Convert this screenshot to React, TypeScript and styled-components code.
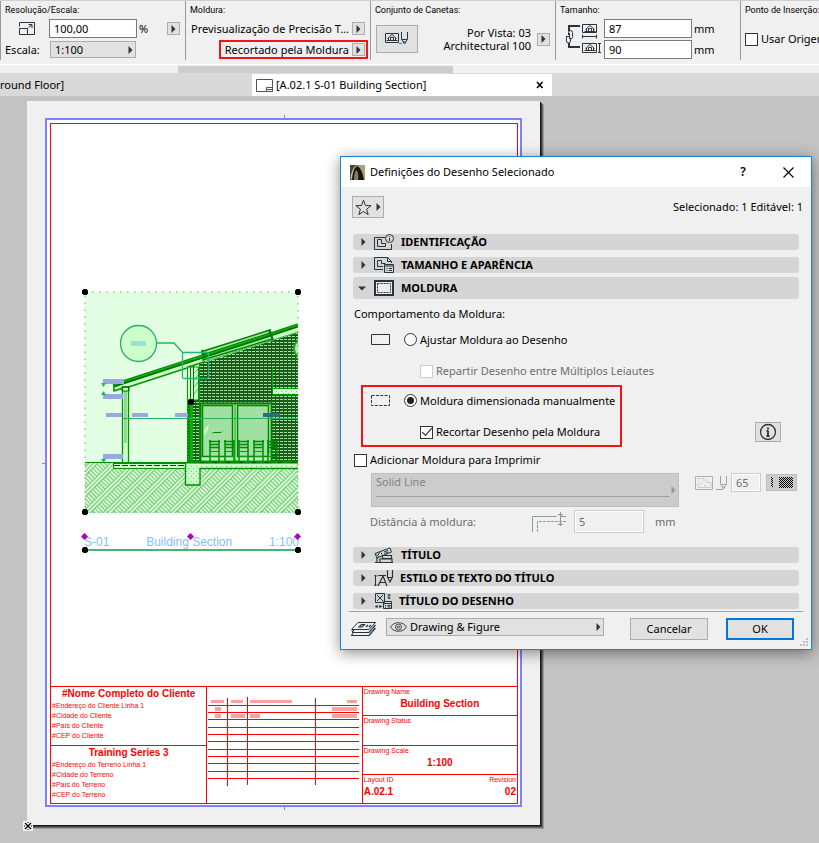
import React from 'react';
import styled, { createGlobalStyle, css } from 'styled-components';

const INK = '#27343d';

const GlobalStyle = createGlobalStyle`
  *, *::before, *::after { box-sizing: border-box; }
  html, body, #root { height: 100%; }
  body { margin: 0; overflow: hidden; }
  body, button, input, select {
    font-family: "Noto Sans", "Open Sans", sans-serif;
    font-size: 11px;
    line-height: 14px;
    color: #000;
  }
  svg { display: block; flex: none; }
`;

const Page = styled.div`
  display: flex;
  flex-direction: column;
  height: 100vh;
  min-height: 760px;
  overflow: hidden;
  background: #c3c3c3;
`;

/* ---------- info bar ---------- */

const InfoBar = styled.header`
  display: flex;
  flex: none;
  height: 64px;
  padding-bottom: 4px;
  border-top: 1px solid #d0d0d0;
  background: #f0f0f0;
  overflow: hidden;
`;

const InfoPanel = styled.section`
  flex: 0 0 185px;
  height: 59px;
  padding: 2px 5px 0 4px;
  border-left: 1px solid #999;
  white-space: nowrap;
`;

const PanelTitle = styled.h2`
  margin: 0 0 1px;
  font-family: Roboto, "Noto Sans", sans-serif;
  font-size: 9px;
  font-weight: 400;
  line-height: 14px;
`;

const PanelRow = styled.div<{ $end?: boolean }>`
  display: flex;
  align-items: center;
  justify-content: ${p => (p.$end ? 'flex-end' : 'flex-start')};
  height: 21px;
`;

const PanelBody = styled.div`
  display: flex;
  align-items: center;
  gap: 3px;
  height: 42px;
`;

const IconSlot = styled.span`
  display: flex;
  justify-content: center;
  width: 44px;
`;

const ScaleLabel = styled.label`
  width: 45px;
`;

const Field = styled.input<{ $w: number; $h?: number }>`
  width: ${p => p.$w}px;
  height: ${p => p.$h ?? 19}px;
  padding: 0 4px;
  border: 1px solid #7a7a7a;
  background: #fff;
  &:disabled {
    border: 1px solid #ccc;
    background: #f0f0f0;
    box-shadow: inset 0 0 0 1px #fff;
    color: #6d6d6d;
  }
`;

const Unit = styled.span`
  margin-left: 2px;
`;

const buttonFace = css`
  display: flex;
  align-items: center;
  justify-content: center;
  padding: 0;
  border: 1px solid #adadad;
  background: #e1e1e1;
`;

const Arrow = styled.button<{ $push?: boolean }>`
  ${buttonFace}
  flex: none;
  width: 13px;
  height: 13px;
  margin-left: ${p => (p.$push ? 'auto' : '3px')};
`;

const SelectShell = styled.div<{ $h: number }>`
  position: relative;
  flex: 1;
  height: ${p => p.$h}px;
  select {
    appearance: none;
    width: 100%;
    height: 100%;
    margin: 0;
    padding: 0 0 0 4px;
    border: 1px solid #adadad;
    border-radius: 0;
    background: #e1e1e1;
  }
  > svg {
    position: absolute;
    top: 50%;
    right: 3px;
    margin-top: -4px;
    pointer-events: none;
  }
`;

const ScaleSelect = styled.div`
  display: flex;
  width: 86px;
`;

const Highlight = styled.div`
  display: flex;
  align-items: center;
  height: 19px;
  margin-right: -3px;
  padding: 0 1px 0 4px;
  border: 2px solid #f31414;
`;

const ValueText = styled.span`
  line-height: 13px;
`;

const PenSetValue = styled(ValueText)`
  flex: 1;
  text-align: right;
`;

const PenSetButton = styled.button`
  ${buttonFace}
  width: 42px;
  height: 28px;
  margin-left: 1px;
`;

const SizeIconSlot = styled.span`
  margin-left: 6px;
`;

const SizeFields = styled.div`
  display: flex;
  flex-direction: column;
  gap: 2px;
`;

const FieldLine = styled.label`
  display: flex;
  align-items: center;
`;

const Check = styled.input<{ $dim?: boolean }>`
  appearance: none;
  flex: none;
  display: grid;
  place-items: center;
  width: 13px;
  height: 13px;
  margin: 0;
  border: 1px solid ${p => (p.$dim ? '#ccc' : '#333')};
  background: #fff;
  &[type='radio'] { border-radius: 50%; }
  &[type='radio']:checked::after {
    content: '';
    width: 7px;
    height: 7px;
    border-radius: 50%;
    background: #222;
  }
  &[type='checkbox']:checked::after {
    content: '';
    width: 10px;
    height: 5px;
    margin-bottom: 3px;
    border: solid #222;
    border-width: 0 0 1px 1px;
    transform: rotate(-48deg);
  }
`;

const CheckLabel = styled.label<{ $dim?: boolean }>`
  display: flex;
  align-items: center;
  gap: 3px;
  white-space: nowrap;
  color: ${p => (p.$dim ? '#6d6d6d' : '#000')};
`;

/* ---------- scroll strip and tabs ---------- */

const ScrollStrip = styled.div`
  flex: none;
  height: 9px;
  padding: 1px 366px 1px 178px;
  border-top: 1px solid #fff;
  background: #f0f0f0;
`;

const ScrollThumb = styled.div`
  height: 7px;
  background: #cdcdcd;
`;

const TabBar = styled.nav`
  display: flex;
  flex: none;
  height: 23px;
  background: #d9d9d9;
`;

const Tab = styled.div<{ $active?: boolean }>`
  display: flex;
  align-items: center;
  flex: 0 0 ${p => (p.$active ? 300 : 252)}px;
  gap: 2px;
  padding: ${p => (p.$active ? '0 7px 0 4px' : '0')};
  margin-top: 1px;
  background: ${p => (p.$active ? '#fff' : 'transparent')};
  white-space: nowrap;
`;

const TabClose = styled.button`
  display: flex;
  margin-left: auto;
  padding: 1px;
  border: 0;
  background: none;
`;

/* ---------- layout sheet ---------- */

const Workspace = styled.main`
  position: relative;
  display: flex;
  flex: 1;
  padding: 5px 0 18px 27px;
  min-height: 0;
`;

const Paper = styled.div`
  position: relative;
  display: flex;
  width: 100%;
  max-width: 513px;
  padding: 17px 18px 18px;
  background: #f0f0f0;
  box-shadow: 1px 1px 0 #1a1a1a, 2px 2px 0 #3c3c3c, 3px 3px 0 #6a6a6a, 4px 4px 0 #9c9c9c;
`;

const OriginMark = styled.svg`
  position: absolute;
  left: -4px;
  bottom: -6px;
`;

const MarginFrame = styled.div`
  position: relative;
  display: flex;
  flex: 1;
  padding: 3px 2px 1px 3px;
  border: 2px solid #8080ff;
  background: #fff;
`;

const Tick = styled.i<{ $side: 'left' | 'top' | 'bottom' }>`
  position: absolute;
  background: #8080ff;
  ${p => p.$side === 'left' && css`left: -5px; top: 50%; width: 4px; height: 1px;`}
  ${p => p.$side === 'top' && css`left: 50%; top: -5px; width: 1px; height: 4px;`}
  ${p => p.$side === 'bottom' && css`left: 50%; bottom: -5px; width: 1px; height: 4px;`}
`;

const Sheet = styled.div`
  display: flex;
  flex: 1;
  flex-direction: column;
  border: 1px solid #f00;
`;

const DrawingArea = styled.div`
  flex: 1;
  padding: 163px 29px 0;
`;

const Figure = styled.figure`
  width: 224px;
  margin: 0;
`;

const Caption = styled.figcaption`
  position: relative;
  display: flex;
  justify-content: space-between;
  margin: 18px 5px 0 4px;
  border-bottom: 2px solid #45b56f;
  font-family: "Liberation Sans", Arial, sans-serif;
  font-size: 12px;
  line-height: 14px;
  color: #80bfff;
`;

const CaptionHandles = styled.svg`
  position: absolute;
  left: -4px;
  top: -3px;
`;

const TitleBlock = styled.div`
  display: grid;
  grid-template-columns: 1fr 1fr 1fr;
  flex: none;
  height: 117px;
  border-top: 1px solid #f00;
  font-family: "Liberation Sans", Arial, sans-serif;
  font-size: 7px;
  line-height: 10px;
  color: #f00;
`;

const BlockColumn = styled.div`
  display: flex;
  flex-direction: column;
  & + & { border-left: 1px solid #f00; }
`;

const BlockCell = styled.div`
  flex: 1;
  padding: 0 1px;
  white-space: nowrap;
  & + & { border-top: 1px solid #f00; }
`;

const BlockStrong = styled.strong`
  display: block;
  font-size: 10px;
  line-height: 14px;
  text-align: center;
`;

const BlockLine = styled.div``;

const Split = styled.div`
  display: flex;
  justify-content: space-between;
`;

/* ---------- dialog ---------- */

const Dialog = styled.div`
  position: absolute;
  top: 60px;
  left: 340px;
  right: 7px;
  border: 1px solid #1883d7;
  background: #f0f0f0;
  box-shadow: 0 3px 14px rgba(0, 0, 0, 0.45);
`;

const DialogTitle = styled.div`
  display: flex;
  align-items: center;
  height: 30px;
  gap: 5px;
  padding: 0 17px 0 9px;
  background: #fff;
  h1 {
    flex: 1;
    margin: 0;
    font-size: 11px;
    font-weight: 400;
  }
`;

const TitleButton = styled.button`
  display: flex;
  justify-content: center;
  width: 12px;
  margin-left: 28px;
  padding: 0;
  border: 0;
  background: none;
  font-size: 12px;
  font-weight: 600;
`;

const DialogBody = styled.div`
  padding: 9px 12px 0;
`;

const TopRow = styled.div`
  display: flex;
  align-items: center;
  justify-content: space-between;
  margin: 0 -4px 16px -1px;
`;

const FavoriteButton = styled.button`
  ${buttonFace}
  width: 32px;
  height: 22px;
  gap: 4px;
`;

const Header = styled.button<{ $open?: boolean }>`
  display: flex;
  align-items: center;
  width: 100%;
  height: ${p => (p.$open ? 22 : 16)}px;
  margin: ${p => (p.$open ? '-3px 0 0' : '0 0 7px')};
  padding: 0 0 0 ${p => (p.$open ? 5 : 8)}px;
  border: 0;
  border-radius: 3px;
  background: #d5d5d5;
  font-weight: 700;
  > svg:first-child { margin-right: 8px; }
  > svg + svg { margin-right: 6px; }
`;

const FramePanel = styled.div`
  display: flex;
  flex-direction: column;
  padding: 8px 0 14px 1px;
`;

const OptionRow = styled.div<{ $h: number; $indent: number }>`
  display: flex;
  align-items: center;
  gap: 14px;
  height: ${p => p.$h}px;
  padding-left: ${p => p.$indent}px;
`;

const ManualRow = styled.div`
  display: flex;
  align-items: flex-end;
  justify-content: space-between;
  margin: 1px 0 6px;
  padding-right: 18px;
`;

const ManualBox = styled.div`
  width: 261px;
  height: 62px;
  margin-left: 7px;
  border: 2px solid #f31414;
`;

const InfoButton = styled.button`
  ${buttonFace}
  width: 26px;
  height: 20px;
  margin-bottom: 5px;
`;

const LineRow = styled.div`
  display: flex;
  align-items: flex-start;
  padding: 6px 2px 0 17px;
`;

const LineSelect = styled.div`
  position: relative;
  flex: 1;
  height: 34px;
  margin-right: 16px;
  select {
    appearance: none;
    width: 100%;
    height: 100%;
    padding: 0 4px 16px;
    border: 1px solid #bfbfbf;
    border-radius: 0;
    background: #ccc;
    color: #838383;
    opacity: 1;
  }
  &::after {
    content: '';
    position: absolute;
    left: 5px;
    right: 9px;
    bottom: 10px;
    height: 1px;
    background: #a0a0a0;
  }
  > svg {
    position: absolute;
    right: 3px;
    top: 13px;
  }
`;

const PenGroup = styled.div`
  display: flex;
  align-items: center;
  gap: 3px;
`;

const SwatchButton = styled.button`
  ${buttonFace}
  width: 31px;
  height: 17px;
  margin-left: 2px;
  border-color: #bfbfbf;
  background: #ccc;
`;

const DistanceRow = styled.div`
  display: flex;
  align-items: center;
  gap: 7px;
  padding: 3px 0 0 16px;
  color: #6d6d6d;
  label { width: 155px; }
`;

const DistanceUnit = styled.span`
  margin-left: 4px;
`;

const Footer = styled.footer`
  display: flex;
  align-items: center;
  margin: -5px 8px 0;
  padding: 6px 9px 9px 2px;
  border-top: 1px solid #a0a0a0;
  > svg { margin-right: 10px; }
`;

const LayerSelect = styled(SelectShell)`
  margin-bottom: 4px;
  margin-right: 26px;
  select { padding-left: 23px; }
  > svg:last-child { left: 4px; right: auto; margin-top: -5px; }
`;

const DialogButton = styled.button<{ $primary?: boolean }>`
  ${buttonFace}
  width: ${p => (p.$primary ? 68 : 78)}px;
  height: 22px;
  border: ${p => (p.$primary ? '2px solid #0078d7' : '1px solid #adadad')};
  & + & { margin-left: 18px; }
`;

const Grip = styled.svg`
  position: absolute;
  right: 2px;
  bottom: 2px;
`;

/* ---------- icons ---------- */

const Triangle = ({ color = '#333' }: { color?: string }) => (
  <svg width="5" height="8" viewBox="0 0 5 8"><path d="M.5 0v8L4.500 4z" fill={color} /></svg>
);

const Icon = ({ w, h, children, color = INK }: { w: number; h: number; children: React.ReactNode; color?: string }) => (
  <svg width={w} height={h} viewBox={`0 0 ${w} ${h}`} fill="none" stroke={color}>{children}</svg>
);

const ResizeIcon = () => (
  <Icon w={17} h={14}>
    <path d="M.5 4.500V.5h15v12h-7M.5 6.500h8v6h-8zM7.500 6.500h1M9.500 5.500l3.500-3M9.500 2.500h3.500v3.500" />
  </Icon>
);

const HouseGlyph = () => (
  <path d="M1.500 8.500h11M3.500 8V6M10.500 8V6M2.500 6.500l4.500-4 4.500 4M5.500 8V5.500h3V8" />
);

const PenSetIcon = () => (
  <Icon w={24} h={15}>
    <path d="M.5 1.500h13v9h-13z" />
    <HouseGlyph />
    <path d="M16.500 0v7l3 5 3-5V0M17 7.500h5M18 10h3" />
    <path d="M14 11.500h3" stroke="#2a7fd4" />
  </Icon>
);

const SizeLinkIcon = () => (
  <Icon w={35} h={30}>
    <path d="M3 7V2h11M3 19v4h11" strokeWidth="2" />
    <path d="M2.500 11V8.500a2 2 0 0 1 4 0v4M3.500 9v6M.5 12v5a2 2 0 0 0 4 0v-3M1 12.500h3M6.500 12.500c0 2-1 2.500-2 2.500" />
    <path d="M16.500.5h14v8h-14zM16.500 19.500h14v9h-14z" />
    <g transform="translate(17 -1)"><HouseGlyph /></g>
    <g transform="translate(17 18)"><HouseGlyph /></g>
    <path d="M17 12.500h13M16.500 10.500v4M30.500 10.500v4M33.500 19.500v9M32 19.500h3M32 28.500h3" />
  </Icon>
);

const LayoutIcon = () => (
  <Icon w={18} h={13} color="#555">
    <path d="M.5.5h16v12H.5zM10.500 8.500h6v4h-6zM10.500 10.500h6" />
  </Icon>
);

const CloseIcon = () => (
  <Icon w={8} h={8} color="#000"><path d="M1 1l5.500 6M6.500 1L1 7" strokeWidth="1.600" /></Icon>
);

const AppIcon = () => (
  <svg width="15" height="15" viewBox="0 0 15 15">
    <rect width="15" height="15" fill="#857a5c" />
    <path d="M0 0h6L2 8 1 15H0z" fill="#4a4536" />
    <path d="M8 0h7v15h-2C13 8 11 3 8 1z" fill="#a89e80" />
    <path d="M2 15C3 8 4 3 7 1c4 2 6 8 7 14H8C9 10 8 6 6 5 4 8 4 12 4 15z" fill="#17140f" />
    <path d="M1 14C2 6 4 2 6.500 1" fill="none" stroke="#e0d8be" />
  </svg>
);

const StarIcon = () => (
  <Icon w={17} h={17}>
    <path d="M8.500 1.200l2 5.300 5.600.2-4.500 3.500 1.600 5.400-4.700-3.100-4.700 3.100 1.600-5.400L.9 6.700l5.600-.2z" />
  </Icon>
);

const IdentIcon = () => (
  <Icon w={21} h={16}>
    <path d="M11 3.500H.5v12h17V10M3.500 5.500h4v4h4v3h-8z" />
    <circle cx="15.500" cy="4.500" r="4" />
    <path d="M15.500 4v3M15.500 2v1" />
  </Icon>
);

const SizeIcon = () => (
  <Icon w={21} h={16}>
    <path d="M9 12.500H.5V.5h13l4 4M13.500.5v4h4V6M3.500 3.500h4v3h4M3.500 3.500v6H9" />
    <path d="M10.500 7.500h9v8h-9zM10 9h10M12.500 11.500h1M15 11.500h3M12.500 13.500h1M15 13.500h3" />
  </Icon>
);

const FrameIcon = () => (
  <Icon w={21} h={16}>
    <path d="M1 1h18v14H1z" strokeWidth="2" fill="#ececec" />
    <path d="M3.500 3.500h13v9h-13z" strokeDasharray="2 1" />
  </Icon>
);

const LabelIcon = () => (
  <Icon w={21} h={17}>
    <path d="M1 6.500L16 1l1.500 4L3 11z" fill="#d5d5d5" />
    <path d="M4 8.500l1.500-3M7 5.500l1 2M10 5l4-1.500M10.500 6.500l4-1.500M2.500 7.500l2 2" />
    <path d="M8.500 8.500h9v3h-9zM3 10v5.500h15v-4M1 15.500h18M6 15v-3h12" strokeWidth="1.200" />
  </Icon>
);

const TextStyleIcon = () => (
  <Icon w={20} h={17}>
    <path d="M1.500 5v11M0 6.500L1.500 5 3 6.500M0 14.500L1.500 16 3 14.500M4 5.500h8" />
    <path d="M4 16l5-10 4 10M6 12.500h5.500M13.500 0v7l2.500 5 2.500-5V0M13.500 7.500h5" strokeWidth="1.200" />
  </Icon>
);

const DrawingTitleIcon = () => (
  <Icon w={19} h={17}>
    <path d="M1.500.5h9v9h-9zM3 2l6 6M9 2L3 8" />
    <path d="M9.500 8.500h8v7h-8zM9.500 10.500h8M11 12.500h1M13.500 12.500h3M11 14h1M13.500 14h3M15 1v5M13.500 2h3M13.500 5h3M1 13.500h3M5 13.500h3M3 12v3M6 12v3" />
  </Icon>
);

const SolidFrameIcon = () => <Icon w={19} h={12}><path d="M.5.5h18v10H.5z" /></Icon>;
const DashFrameIcon = () => <Icon w={19} h={12}><path d="M.5.5h18v10H.5z" strokeDasharray="3 1.400" /></Icon>;

const InfoIcon = () => (
  <Icon w={18} h={18}>
    <circle cx="9" cy="9" r="7.500" strokeWidth="1.300" />
    <path d="M9 7.500v5.500M9 4.500v2M7.500 13h3M7.500 7.800H9" strokeWidth="1.800" />
  </Icon>
);

const PlanIcon = () => (
  <Icon w={18} h={14} color="#a9aeb1">
    <path d="M.5.5h17v13H.5z" />
    <path d="M3 11.500h13v-5h-4v-4M3 2.500h6v3M3 2.500v2M3 7v4M10 8.500v3M5 5.500l2 2-2 2" stroke="#c8cccd" />
  </Icon>
);

const PenIcon = () => (
  <Icon w={12} h={14} color="#9fa3a6">
    <path d="M4.500 0v8l3 5 3-5V0M5 8.500h5M0 13.500h7M6 11h3" />
  </Icon>
);

const SwatchIcon = () => (
  <svg width="22" height="11" viewBox="0 0 22 11">
    <defs>
      <pattern id="checker" width="2" height="2" patternUnits="userSpaceOnUse">
        <rect width="2" height="2" fill="#ccc" />
        <path d="M0 0h1v1H0zM1 1h1v1H1z" fill="#000" />
      </pattern>
    </defs>
    <path d="M0 0h2v10H0zM8 0h14v11H8z" fill="url(#checker)" shapeRendering="crispEdges" />
  </svg>
);

const OffsetIcon = () => (
  <Icon w={35} h={20} color="#92979a">
    <path d="M.5 20V4.500h24M28 4.500h6" />
    <path d="M5.500 20V9.500H34" strokeDasharray="3 1" />
    <path d="M28.500 0v14M26 2.500h5M26 12.500h5M27 2l1.500 2L30 2M27 13l1.500-2 1.500 2" />
  </Icon>
);

const LayersIcon = () => (
  <Icon w={25} h={14}>
    <path d="M7 .5h17.500L18 7.500H.5z" />
    <path d="M24.500 3L18 10.500H1M24.500 6L18 13.500H.5L2 11.500M1 10l2-2M8 5l2.500-2.500h3L11 5zM15 5l2-2M18 5l2-2" strokeWidth="1.200" />
  </Icon>
);

const EyeIcon = () => (
  <Icon w={17} h={10} color="#444">
    <path d="M.5 5C4-.8 13-.8 16.500 5 13 10.800 4 10.800.5 5z" />
    <circle cx="8.500" cy="5" r="3" />
    <circle cx="8.500" cy="5" r="1" />
  </Icon>
);

/* ---------- building section drawing ---------- */

const HANDLE = 'M-1.500-3h3l1.500 1.500v3L1.500 3h-3L-3 1.500v-3z';

const SectionDrawing = () => (
  <svg width="224" height="230" viewBox="80 287 224 230" fill="none">
    <defs>
      <clipPath id="crop"><rect x="85" y="292" width="213" height="221" /></clipPath>
      <pattern id="brick" width="4" height="3" patternUnits="userSpaceOnUse">
        <rect width="4" height="3" fill="#1b5c1b" />
        <rect width="3" height="1" fill="#a4e0a4" />
      </pattern>
      <pattern id="soil" width="3" height="15" patternUnits="userSpaceOnUse" patternTransform="rotate(-45)">
        <path d="M0 .5h3M0 3.500h3M0 6.500h3M1.500 6.500v8.500" stroke="#6fae6f" strokeWidth=".8" />
      </pattern>
      <pattern id="concrete" width="5" height="5" patternUnits="userSpaceOnUse">
        <path d="M1 1h1v1H1zM3 3h1v1H3z" fill="#7fc27f" />
      </pattern>
    </defs>
    <g clipPath="url(#crop)">
      <rect x="85" y="292" width="213" height="221" fill="#e3ffe3" />
      <rect x="85" y="463" width="213" height="50" fill="#ccffcc" />
      <rect x="85" y="463" width="213" height="50" fill="url(#soil)" />

      <path d="M199 364L298 332V463H199z" fill="url(#brick)" shapeRendering="crispEdges" />
      <path d="M187 400h12v63h-12z" fill="url(#brick)" shapeRendering="crispEdges" />

      <path d="M113.500 385.500L298 325.500V332.500L113.500 391.500z" fill="#ccffcc" />
      <path d="M202 351.500L270 330l2.500 9-69.500 21z" fill="#a0e0a0" stroke="#008000" strokeWidth="1.500" />
      <path d="M202 355L271 333" stroke="#008000" />
      <path d="M113.500 385.500L298 325.500" stroke="#006e00" strokeWidth="4" />
      <path d="M113.500 385L298 325" stroke="#00b800" strokeWidth="1.500" />
      <path d="M114 391.500V384M114 391l12-4M127 387.500L187 368M187 367.500L205 361.500" stroke="#009600" strokeWidth="1.600" />
      <path d="M205 361.500L298 332" stroke="#2cc02c" />
      <path d="M202 350l3 8M269 330l4 10" stroke="#007800" strokeWidth="2" />

      <path d="M122.500 387h6v76h-6z" fill="#ccffcc" stroke="#009000" strokeWidth="1.300" />
      <path d="M125.500 391v52" stroke="#90d890" strokeWidth="3" />
      <path d="M122 387h7v4h-7z" stroke="#007000" />
      <path d="M187.500 367h11v33h-11z" fill="#ccffcc" stroke="#009000" />
      <path d="M190.500 366v36M193.500 366v36" stroke="#007800" />
      <path d="M194 380l4-5M194 387l4-5M194 394l4-5M194 373l4-4" stroke="#70b070" />
      <path d="M199.500 363v100M187.500 368v95" stroke="#00a000" />
      <path d="M191 402v61" stroke="#00b400" strokeWidth="4" />
      <path d="M189 402v61" stroke="#006c00" />

      <rect x="200.500" y="403.500" width="71" height="59" fill="#c0f4c0" stroke="#008400" strokeWidth="2" />
      <rect x="202.500" y="405.500" width="30" height="51" fill="#a0e0a0" stroke="#008400" strokeWidth="1.500" />
      <rect x="237.500" y="405.500" width="31" height="51" fill="#a0e0a0" stroke="#008400" strokeWidth="1.500" />
      <path d="M235 403v59" stroke="#00a000" />
      <path d="M204 430l5-6-1 6-4 6z" fill="#ccf6cc" />
      <path d="M212 433.500l1-1h8l1-1" stroke="#008800" />

      {[210, 225, 239, 254, 268].map(x => (
        <g key={x} stroke="#008c00">
          <path d={`M${x} 440v22M${x + 9} 440v22`} strokeWidth="1.500" />
          <path d={`M${x - 1} 441.500h11M${x} 444.500h9M${x} 447.500h9`} strokeWidth="1.600" />
          <path d={`M${x - 1} 451.500h11M${x} 456.500h9`} stroke="#00a400" />
        </g>
      ))}

      <path d="M272.500 367v21" stroke="#00b000" />
      <rect x="272.500" y="388.500" width="30" height="6" fill="#d8ffd8" stroke="#00a000" />
      <rect x="274" y="390" width="26" height="4" fill="url(#concrete)" />
      <circle cx="303" cy="348.500" r="9" fill="#b4f0b4" stroke="#28a828" strokeWidth="2" />

      <rect x="113.500" y="463.500" width="73" height="5" fill="#ccffcc" stroke="#009000" />
      <path d="M114 465.500h72" stroke="#004c00" strokeDasharray="6 2" />
      <path d="M200 463.500h98v5h-98z" fill="#ccffcc" />
      <path d="M185.500 463.500h14.500v21.500h-14.500z" fill="#ccffcc" />
      <path d="M186 464h14v20h-14zM200 464h98v4h-98z" fill="url(#concrete)" />
      <path d="M185.500 463v22h14.500v-16.500H298" stroke="#009000" strokeWidth="1.300" />
      <path d="M85 462.500h102" stroke="#008c00" />
      <path d="M187 462h111" stroke="#009400" strokeWidth="3" />
      <path d="M200 462.500h98" stroke="#004c00" strokeDasharray="4 9" />

      <g fill="#94aae0">
        <path d="M103 379h21v5h-21zM103 394h20v5h-20zM106 413h16v4h-16zM132 413h16v4h-16zM175 413h13v4h-13zM103 454h20v5h-20z" />
        <path d="M263 413h17v4h-17z" fill="#336a7a" />
      </g>
      <path d="M122 418.500h176" stroke="#25b060" />
      <path d="M101 383h5l-2.500 4zM101 395h5l-2.500-4zM101 459h5l-2.500 4z" fill="#28b450" />
      <circle cx="138.500" cy="343.500" r="18" fill="#ccffcc" stroke="#28b060" strokeWidth="1.300" />
      <rect x="131" y="341" width="15" height="5" fill="#99e3d0" />
      <path d="M157 343h17l9 10" stroke="#28b468" strokeWidth="1.300" />
      <rect x="182.500" y="352.500" width="26" height="26" rx="1.500" stroke="#28b478" strokeWidth="1.300" />
    </g>
    <rect x="85" y="292" width="213" height="220" stroke="#48c048" strokeDasharray="1.500 5.500" />
    <g fill="#000">
      {[[85, 292], [298, 292], [191, 402], [85, 512], [298, 512]].map(([x, y]) => (
        <path key={`${x}-${y}`} d={HANDLE} transform={`translate(${x} ${y})`} />
      ))}
    </g>
  </svg>
);

const RevisionGrid = () => (
  <svg width="154" height="100" viewBox="0 0 154 100" shapeRendering="crispEdges">
    <path
      d="M4 13h13v3H4zM24 13h12v3H24zM43 13h42v3H43zM140 13h10v3h-10zM8 20h6v4H8zM125 20h25v4h-25zM8 27h6v4H8zM24 27h14v4H24zM43 27h10v4H43zM125 27h25v4h-25z"
      fill="#ffa0a0"
    />
    <path
      d="M1 18.500h151M1 25.500h151M1 32.500h151M1 40.500h151M1 47.500h151M1 54.500h151M1 62.500h151M1 69.500h151M1 76.500h151M1 84.500h151M1 91.500h151M20.500 11v88M40.500 10v88M108.500 11v87"
      stroke="#f00"
    />
  </svg>
);

/* ---------- page ---------- */

const InfoToolbar = () => (
  <InfoBar>
    <InfoPanel>
      <PanelTitle>Resolução/Escala:</PanelTitle>
      <PanelRow>
        <IconSlot><ResizeIcon /></IconSlot>
        <Field $w={88} defaultValue="100,00" aria-label="Resolução" />
        <Unit>%</Unit>
        <Arrow $push aria-label="Opções de resolução"><Triangle /></Arrow>
      </PanelRow>
      <PanelRow>
        <ScaleLabel htmlFor="scale">Escala:</ScaleLabel>
        <ScaleSelect>
          <SelectShell $h={17}>
            <select id="scale"><option>1:100</option></select>
            <Triangle />
          </SelectShell>
        </ScaleSelect>
      </PanelRow>
    </InfoPanel>
    <InfoPanel>
      <PanelTitle>Moldura:</PanelTitle>
      <PanelRow $end>
        <ValueText>Previsualização de Precisão T...</ValueText>
        <Arrow aria-label="Previsualização"><Triangle /></Arrow>
      </PanelRow>
      <PanelRow $end>
        <Highlight>
          <ValueText>Recortado pela Moldura</ValueText>
          <Arrow aria-label="Recorte"><Triangle /></Arrow>
        </Highlight>
      </PanelRow>
    </InfoPanel>
    <InfoPanel>
      <PanelTitle>Conjunto de Canetas:</PanelTitle>
      <PanelBody>
        <PenSetButton aria-label="Conjunto de Canetas"><PenSetIcon /></PenSetButton>
        <PenSetValue>Por Vista: 03<br />Architectural 100</PenSetValue>
        <Arrow aria-label="Escolher conjunto"><Triangle /></Arrow>
      </PanelBody>
    </InfoPanel>
    <InfoPanel>
      <PanelTitle>Tamanho:</PanelTitle>
      <PanelBody>
        <SizeIconSlot><SizeLinkIcon /></SizeIconSlot>
        <SizeFields>
          <FieldLine><Field $w={88} defaultValue="87" aria-label="Largura" /><Unit>mm</Unit></FieldLine>
          <FieldLine><Field $w={88} defaultValue="90" aria-label="Altura" /><Unit>mm</Unit></FieldLine>
        </SizeFields>
      </PanelBody>
    </InfoPanel>
    <InfoPanel>
      <PanelTitle>Ponto de Inserção:</PanelTitle>
      <PanelBody>
        <CheckLabel><Check type="checkbox" />Usar Origem</CheckLabel>
      </PanelBody>
    </InfoPanel>
  </InfoBar>
);

const LayoutSheet = () => (
  <Paper>
    <MarginFrame>
      <Tick $side="left" />
      <Tick $side="top" />
      <Tick $side="bottom" />
      <Sheet>
        <DrawingArea>
          <Figure>
            <SectionDrawing />
            <Caption>
              <span>S-01</span>
              <span>Building Section</span>
              <span>1:100</span>
              <CaptionHandles width="222" height="24" viewBox="80 532 222 24">
                <path d="M84.500 533l3.500 3.500-3.500 3.500-3.500-3.500zM190.500 533l3.500 3.500-3.500 3.500-3.500-3.500zM297.500 533l3.500 3.500-3.500 3.500-3.500-3.500z" fill="#b400b4" />
                <path d={HANDLE} transform="translate(85 550)" />
                <path d={HANDLE} transform="translate(298 550)" />
              </CaptionHandles>
            </Caption>
          </Figure>
        </DrawingArea>
        <TitleBlock>
          <BlockColumn>
            <BlockCell>
              <BlockStrong>#Nome Completo do Cliente</BlockStrong>
              <BlockLine>#Endereço do Cliente Linha 1</BlockLine>
              <BlockLine>#Cidade do Cliente</BlockLine>
              <BlockLine>#País do Cliente</BlockLine>
              <BlockLine>#CEP do Cliente</BlockLine>
            </BlockCell>
            <BlockCell>
              <BlockStrong>Training Series 3</BlockStrong>
              <BlockLine>#Endereço do Terreno Linha 1</BlockLine>
              <BlockLine>#Cidade do Terreno</BlockLine>
              <BlockLine>#País do Terreno</BlockLine>
              <BlockLine>#CEP do Terreno</BlockLine>
            </BlockCell>
          </BlockColumn>
          <BlockColumn><RevisionGrid /></BlockColumn>
          <BlockColumn>
            <BlockCell>
              <BlockLine>Drawing Name</BlockLine>
              <BlockStrong>Building Section</BlockStrong>
            </BlockCell>
            <BlockCell><BlockLine>Drawing Status</BlockLine></BlockCell>
            <BlockCell>
              <BlockLine>Drawing Scale</BlockLine>
              <BlockStrong>1:100</BlockStrong>
            </BlockCell>
            <BlockCell>
              <Split><span>Layout ID</span><span>Revision</span></Split>
              <Split><BlockStrong>A.02.1</BlockStrong><BlockStrong>02</BlockStrong></Split>
            </BlockCell>
          </BlockColumn>
        </TitleBlock>
      </Sheet>
    </MarginFrame>
    <OriginMark width="10" height="10" viewBox="0 0 10 10">
      <rect width="10" height="10" fill="#f4f4f4" />
      <path d="M2 2l6 6M8 2L2 8" stroke="#000" strokeWidth="1.300" />
      <path d="M4 1h2v1H4zM4 8h2v1H4zM1 4h1v2H1zM8 4h1v2H8z" fill="#777" />
    </OriginMark>
  </Paper>
);

const SelectionDialog = () => (
  <Dialog role="dialog" aria-labelledby="dialog-title">
    <DialogTitle>
      <AppIcon />
      <h1 id="dialog-title">Definições do Desenho Selecionado</h1>
      <TitleButton aria-label="Ajuda">?</TitleButton>
      <TitleButton aria-label="Fechar">
        <Icon w={11} h={11} color="#000"><path d="M.5.5l10 10M10.500.5l-10 10" strokeWidth="1.100" /></Icon>
      </TitleButton>
    </DialogTitle>
    <DialogBody>
      <TopRow>
        <FavoriteButton aria-label="Favoritos"><StarIcon /><Triangle /></FavoriteButton>
        <span>Selecionado: 1 Editável: 1</span>
      </TopRow>
      <Header><Triangle /><IdentIcon />IDENTIFICAÇÃO</Header>
      <Header><Triangle /><SizeIcon />TAMANHO E APARÊNCIA</Header>
      <Header $open>
        <svg width="8" height="5" viewBox="0 0 8 5"><path d="M0 .5h8L4 4.500z" fill="#333" /></svg>
        <FrameIcon />MOLDURA
      </Header>
      <FramePanel>
        <span>Comportamento da Moldura:</span>
        <OptionRow $h={37} $indent={17}>
          <SolidFrameIcon />
          <CheckLabel><Check type="radio" name="frame" />Ajustar Moldura ao Desenho</CheckLabel>
        </OptionRow>
        <OptionRow $h={26} $indent={66}>
          <CheckLabel $dim><Check $dim type="checkbox" disabled />Repartir Desenho entre Múltiplos Leiautes</CheckLabel>
        </OptionRow>
        <ManualRow>
          <ManualBox>
            <OptionRow $h={27} $indent={8}>
              <DashFrameIcon />
              <CheckLabel><Check type="radio" name="frame" defaultChecked />Moldura dimensionada manualmente</CheckLabel>
            </OptionRow>
            <OptionRow $h={36} $indent={57}>
              <CheckLabel><Check type="checkbox" defaultChecked />Recortar Desenho pela Moldura</CheckLabel>
            </OptionRow>
          </ManualBox>
          <InfoButton aria-label="Informação"><InfoIcon /></InfoButton>
        </ManualRow>
        <CheckLabel><Check type="checkbox" />Adicionar Moldura para Imprimir</CheckLabel>
        <LineRow>
          <LineSelect>
            <select disabled aria-label="Tipo de linha"><option>Solid Line</option></select>
            <Triangle color="#999" />
          </LineSelect>
          <PenGroup>
            <PlanIcon />
            <PenIcon />
            <Field $w={30} disabled defaultValue="65" aria-label="Caneta" />
            <SwatchButton disabled aria-label="Cor da caneta"><SwatchIcon /></SwatchButton>
          </PenGroup>
        </LineRow>
        <DistanceRow>
          <label htmlFor="distance">Distância à moldura:</label>
          <OffsetIcon />
          <Field id="distance" $w={70} $h={23} disabled defaultValue="5" />
          <DistanceUnit>mm</DistanceUnit>
        </DistanceRow>
      </FramePanel>
      <Header><Triangle /><LabelIcon />TÍTULO</Header>
      <Header><Triangle /><TextStyleIcon />ESTILO DE TEXTO DO TÍTULO</Header>
      <Header><Triangle /><DrawingTitleIcon />TÍTULO DO DESENHO</Header>
    </DialogBody>
    <Footer>
      <LayersIcon />
      <LayerSelect $h={18}>
        <select aria-label="Camada"><option>Drawing &amp; Figure</option></select>
        <Triangle />
        <EyeIcon />
      </LayerSelect>
      <DialogButton>Cancelar</DialogButton>
      <DialogButton $primary>OK</DialogButton>
    </Footer>
    <Grip width="9" height="9" viewBox="0 0 9 9">
      <path d="M6 0h2v2H6zM3 3h2v2H3zM6 3h2v2H6zM0 6h2v2H0zM3 6h2v2H3zM6 6h2v2H6z" fill="#bfbfbf" />
    </Grip>
  </Dialog>
);

export default function App() {
  return (
    <Page>
      <GlobalStyle />
      <InfoToolbar />
      <ScrollStrip><ScrollThumb /></ScrollStrip>
      <TabBar>
        <Tab>round Floor]</Tab>
        <Tab $active>
          <LayoutIcon />
          <span>[A.02.1 S-01 Building Section]</span>
          <TabClose aria-label="Fechar aba"><CloseIcon /></TabClose>
        </Tab>
      </TabBar>
      <Workspace>
        <LayoutSheet />
        <SelectionDialog />
      </Workspace>
    </Page>
  );
}
